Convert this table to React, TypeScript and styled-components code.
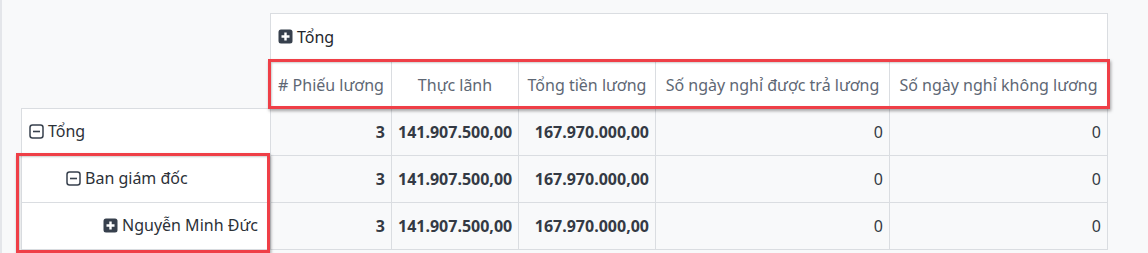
import styled, { createGlobalStyle } from 'styled-components';

const GlobalStyle = createGlobalStyle`
  html, body {
    margin: 0;
    padding: 0;
    background: #f8f9fa;
  }
  body {
    font-family: "Noto Sans", "Open Sans", sans-serif;
    font-size: 16px;
    color: #212529;
  }
`;

const Page = styled.div`
  position: relative;
  height: 253px;
  box-sizing: border-box;
  padding: 13px 0 0 21px;
  border-left: 2px solid #e4e6ea;
  overflow: hidden;
`;

const Pivot = styled.table`
  border-collapse: collapse;
  table-layout: fixed;
  width: 1086px;
  margin-left: -2px;
`;

const Corner = styled.td`
  border: none;
  background: transparent;
  padding: 0;
`;

const GroupHead = styled.th`
  height: 47px;
  padding: 0 7px;
  text-align: left;
  font-weight: 400;
  color: #23272d;
  background: #fff;
  border: 1px solid #dadde1;
  white-space: nowrap;
`;

const MeasureHead = styled.th`
  height: 46px;
  padding: 0 3px;
  text-align: center;
  font-weight: 400;
  color: #5e6774;
  background: #fff;
  border: 1px solid #dadde1;
  white-space: nowrap;
  overflow: hidden;
`;

const RowHead = styled.th<{ $level: number }>`
  height: 46px;
  padding: 0 3px 0 ${(p) => 7 + p.$level * 37}px;
  text-align: left;
  font-weight: 400;
  color: #2c3138;
  background: #fff;
  border: 1px solid #dadde1;
  white-space: nowrap;
`;

const Cell = styled.td<{ $bold?: boolean }>`
  height: 46px;
  padding: 0 6px;
  text-align: right;
  font-weight: ${(p) => (p.$bold ? 700 : 400)};
  color: #343a44;
  background: #f8f9fa;
  border: 1px solid #dadde1;
  white-space: nowrap;
`;

const Toggle = styled.span`
  display: inline-flex;
  align-items: center;
  gap: 4px;
  & svg {
    flex: none;
  }
`;

const Mark = styled.div<{ $x: number; $y: number; $w: number; $h: number }>`
  position: absolute;
  left: ${(p) => p.$x}px;
  top: ${(p) => p.$y}px;
  width: ${(p) => p.$w}px;
  height: ${(p) => p.$h}px;
  box-sizing: border-box;
  border: 3px solid #ef3f47;
  box-shadow: 1px 2px 3px rgba(0, 0, 0, 0.35), inset 1px 1px 2px rgba(0, 0, 0, 0.2);
  pointer-events: none;
`;

function PlusBox() {
  return (
    <svg width="15" height="15" viewBox="0 0 15 15">
      <rect x="0.5" y="0.5" width="14" height="14" rx="2.5" fill="#37404d" />
      <path d="M7.5 3.5v8M3.5 7.5h8" stroke="#fff" strokeWidth="2.4" />
    </svg>
  );
}

function MinusBox() {
  return (
    <svg width="15" height="15" viewBox="0 0 15 15">
      <rect x="1" y="1" width="13" height="13" rx="2.5" fill="none" stroke="#37404d" strokeWidth="1.5" />
      <path d="M4 7.5h7" stroke="#37404d" strokeWidth="1.6" />
    </svg>
  );
}

const measures = [
  '# Phiếu lương',
  'Thực lãnh',
  'Tổng tiền lương',
  'Số ngày nghỉ được trả lương',
  'Số ngày nghỉ không lương',
];

const rows = [
  { label: 'Tổng', level: 0, open: true },
  { label: 'Ban giám đốc', level: 1, open: true },
  { label: 'Nguyễn Minh Đức', level: 2, open: false },
];

const widths = [249, 121, 127, 137, 234, 218];

export default function App() {
  return (
    <>
      <GlobalStyle />
      <Page>
        <Pivot>
          <colgroup>
            {widths.map((w, i) => (
              <col key={i} style={{ width: w }} />
            ))}
          </colgroup>
          <thead>
            <tr>
              <Corner rowSpan={2} />
              <GroupHead colSpan={5}>
                <Toggle>
                  <PlusBox />
                  Tổng
                </Toggle>
              </GroupHead>
            </tr>
            <tr>
              {measures.map((m) => (
                <MeasureHead key={m}>{m}</MeasureHead>
              ))}
            </tr>
          </thead>
          <tbody>
            {rows.map((r) => (
              <tr key={r.label}>
                <RowHead $level={r.level}>
                  <Toggle>
                    {r.open ? <MinusBox /> : <PlusBox />}
                    {r.label}
                  </Toggle>
                </RowHead>
                <Cell $bold>3</Cell>
                <Cell $bold>141.907.500,00</Cell>
                <Cell $bold>167.970.000,00</Cell>
                <Cell>0</Cell>
                <Cell>0</Cell>
              </tr>
            ))}
          </tbody>
        </Pivot>
        <Mark $x={266} $y={59} $w={842} $h={50} />
        <Mark $x={14} $y={153} $w={254} $h={100} />
      </Page>
    </>
  );
}
